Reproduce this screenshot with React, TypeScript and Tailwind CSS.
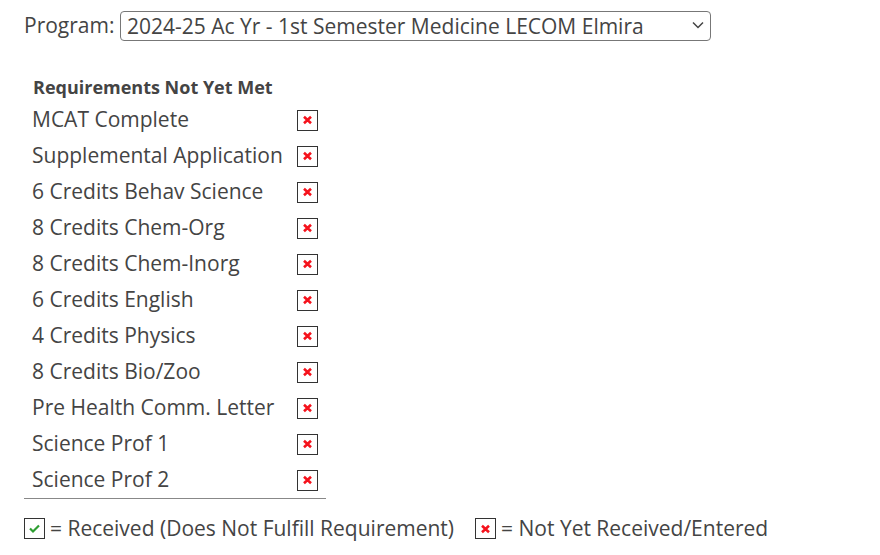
import React from "react";

// 아직 충족되지 않은 요건 목록
const requirements: string[] = [
    "MCAT Complete",
    "Supplemental Application",
    "6 Credits Behav Science",
    "8 Credits Chem-Org",
    "8 Credits Chem-Inorg",
    "6 Credits English",
    "4 Credits Physics",
    "8 Credits Bio/Zoo",
    "Pre Health Comm. Letter",
    "Science Prof 1",
    "Science Prof 2",
];

const XBox = () => (
    <span className="flex w-[21px] h-[21px] border border-[#333] bg-white items-center justify-center">
        <svg width="11" height="10" viewBox="0 0 11 10">
            <path d="M2 1.8 L9 8.2 M9 1.8 L2 8.2" stroke="#f5121c" strokeWidth="2.6" strokeLinecap="butt" />
        </svg>
    </span>
);

const CheckBox = () => (
    <span className="flex w-[21px] h-[21px] border border-[#333] bg-white items-center justify-center">
        <svg width="13" height="11" viewBox="0 0 13 11">
            <path d="M2 5.5 L5 8.5 L11 2.5" stroke="#2e9e32" strokeWidth="2.2" fill="none" />
        </svg>
    </span>
);

export default function App() {
    return (
        <div className="w-[880px] h-[555px] bg-white text-[#444] px-6 pt-[11px]" style={{ fontFamily: '"Open Sans", sans-serif' }}>
            <div className="flex items-center h-[30px]">
                <span className="text-[21px] w-[96px] shrink-0">Program:</span>
                <div className="relative w-[591px] h-[30px]">
                    <select className="appearance-none w-full h-full border border-[#777] rounded-[4px] pl-[6px] text-[21px] text-[#444] bg-white leading-none">
                        <option>2024-25 Ac Yr - 1st Semester Medicine LECOM Elmira</option>
                    </select>
                    <svg className="absolute right-[7px] top-[10px] pointer-events-none" width="12" height="8" viewBox="0 0 12 8">
                        <path d="M1 1.5 L6 6.5 L11 1.5" stroke="#444" strokeWidth="1.5" fill="none" />
                    </svg>
                </div>
            </div>

            <div className="w-[302px] mt-[31px] border-b border-[#888]">
                <div className="pl-[9px] text-[18px] font-bold h-[30px] flex items-center">Requirements Not Yet Met</div>
                {requirements.map((r) => (
                    <div key={r} className="flex items-center justify-between h-[36px] pl-2 pr-2">
                        <span className="text-[21px]">{r}</span>
                        <XBox />
                    </div>
                ))}
            </div>

            <div className="flex items-center mt-[14px] text-[21px]">
                <CheckBox />
                <span className="ml-[5px]">= Received (Does Not Fulfill Requirement)</span>
                <span className="ml-[21px] flex"><XBox /></span>
                <span className="ml-[5px]">= Not Yet Received/Entered</span>
            </div>
        </div>
    );
}
